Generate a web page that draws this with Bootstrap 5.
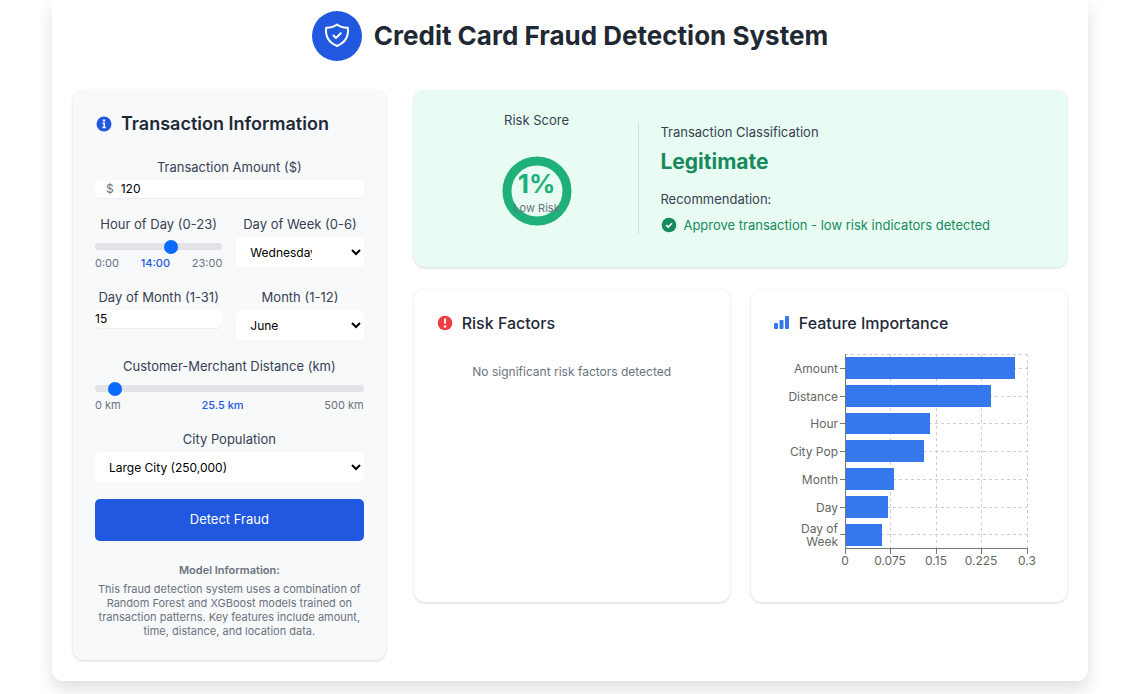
<!DOCTYPE html>
<html lang="en">
<head>
<meta charset="utf-8">
<meta name="viewport" content="width=device-width, initial-scale=1">
<title>Credit Card Fraud Detection System</title>
<link href="https://cdn.jsdelivr.net/npm/bootstrap@5.3.0/dist/css/bootstrap.min.css" rel="stylesheet">
<style>
:root { --brand: #2158e0; --ink: #1f2937; --slate: #374151; --muted: #6b7280; --ok: #178a5d; --soft: 0 1px 3px rgba(0,0,0,.16); }
body { font-family: Inter, "Liberation Sans", sans-serif; font-size: 13px; line-height: 18px; color: var(--slate); background: #fff; }
.page { padding: 0 40px 13px 52px; }
.sheet { background: #fff; padding: 11px 21px 21px; border-radius: 0 0 11px 11px; }
.brand-icon { width: 50px; height: 50px; background: var(--brand); }
.page-title { font-size: 26px; line-height: 32px; font-weight: 700; color: #1f2933; }
.panel { border-radius: 11px; box-shadow: var(--soft); padding: 22px; }
.panel-form { background: #f8f9fb; }
.panel-title { font-size: 18px; line-height: 24px; font-weight: 600; color: var(--ink); }
.sub-title { font-size: 16px; line-height: 24px; font-weight: 500; color: var(--ink); }
.main-row { --bs-gutter-x: 28px; --bs-gutter-y: 29px; }
.pair-row { --bs-gutter-x: 14px; --bs-gutter-y: 17px; }
.card-row { --bs-gutter-x: 21px; --bs-gutter-y: 22px; }
.stack { gap: 17px; margin-top: 22px; }
.field-label { display: block; text-align: center; margin-bottom: 4px; white-space: nowrap; }
.field, .pick { display: block; width: 100%; border: 0; border-radius: 5px; background-color: #fff; color: #000; font-size: 12px; }
.field { height: 18px; padding: 0; box-shadow: 0 1px 1px rgba(0,0,0,.05); }
.money { background: #fff; border-radius: 5px; padding-left: 11px; color: var(--muted); font-size: 12px; box-shadow: 0 1px 1px rgba(0,0,0,.05); gap: 7px; }
.money .field { box-shadow: none; }
.pick { height: 30px; padding: 0 36px 0 10px; }
.slide { -webkit-appearance: none; appearance: none; display: block; width: 100%; height: 18px; margin: 0; background: transparent; }
.slide::-webkit-slider-runnable-track { height: 7px; border-radius: 4px; background: #e1e3e8; }
.slide::-webkit-slider-thumb { -webkit-appearance: none; width: 14px; height: 14px; margin-top: -3px; border-radius: 50%; background: #076bff; }
.scale { font-size: 11px; line-height: 16px; color: var(--muted); }
.scale output { color: var(--brand); font-weight: 500; }
.btn-detect { background: var(--brand); color: #fff; height: 42px; padding: 0; font-size: 13px; border: 0; border-radius: 5px; }
.btn-detect:hover { background: #1b49bd; color: #fff; }
.about-box { padding-top: 17px; }
.about { font-size: 11px; line-height: 14px; color: var(--muted); margin-top: 5px; }
.result { background: #e8fcf3; padding: 21px; min-height: 177px; }
.result-main { padding: 0 21px; border-left: 1px solid #d5dde0; }
.gauge { width: 70px; height: 70px; margin-top: 27px; }
.gauge-num { font-size: 26px; line-height: 26px; font-weight: 700; color: #1fb079; }
.gauge-text { font-size: 11px; line-height: 14px; color: var(--muted); white-space: nowrap; }
.verdict { font-size: 21px; line-height: 25px; font-weight: 700; color: var(--ok); }
.advice { color: var(--ok); gap: 5px; }
.detail { min-height: 313px; }
.empty-note { margin-top: 28px; font-size: 12px; color: var(--muted); }
.icon-box { width: 18px; height: 18px; flex: none; }
.chart { width: 272px; height: 228px; margin-top: 15px; }
.chart text { font-size: 12px; fill: #666; }
</style>
</head>
<body>
<div class="page">
<main class="sheet shadow">
  <header class="d-flex justify-content-center align-items-center">
    <span class="brand-icon rounded-circle d-flex align-items-center justify-content-center me-2 flex-shrink-0">
      <svg width="28" height="28" viewBox="0 0 28 28" fill="none" stroke="#fff" stroke-width="2" stroke-linecap="round" stroke-linejoin="round" aria-hidden="true"><path d="M14 2.500c3 2.400 6.800 3.300 10.800 3.200 1 7.800-2.300 14.800-10.800 18.300C5.500 20.500 2.200 13.500 3.200 5.700 7.200 5.800 11 4.900 14 2.500z"/><path d="M10.500 13.500l2.500 2.500 4.800-4.800"/></svg>
    </span>
    <h1 class="page-title mb-0 ms-1">Credit Card Fraud Detection System</h1>
  </header>

  <div class="row main-row mt-0">
    <div class="col-12 col-md-4">
      <section class="panel panel-form">
        <h2 class="panel-title d-flex align-items-center gap-2 mb-0">
          <svg class="icon-box" viewBox="0 0 18 18" aria-hidden="true"><circle cx="9" cy="9" r="7.500" fill="#2158e0"/><circle cx="9" cy="5.400" r="1.200" fill="#fff"/><path d="M7.500 8.200h1.700v4M7.400 12.400h3.500" fill="none" stroke="#fff" stroke-width="1.500"/></svg>
          Transaction Information
        </h2>
        <form class="stack d-flex flex-column" onsubmit="return false">
          <div>
            <label class="field-label" for="amount">Transaction Amount ($)</label>
            <div class="money d-flex"><span>$</span><input class="field" id="amount" type="text" inputmode="decimal" value="120"></div>
          </div>
          <div class="row pair-row mt-0">
            <div class="col-6 mt-0">
              <label class="field-label" for="hour">Hour of Day (0-23)</label>
              <input class="slide" id="hour" type="range" min="0" max="23" value="14">
              <div class="scale d-flex justify-content-between"><span>0:00</span><output for="hour">14:00</output><span>23:00</span></div>
            </div>
            <div class="col-6 mt-0">
              <label class="field-label" for="weekday">Day of Week (0-6)</label>
              <select class="pick" id="weekday"><option>Sunday</option><option>Monday</option><option>Tuesday</option><option selected>Wednesday</option><option>Thursday</option><option>Friday</option><option>Saturday</option></select>
            </div>
            <div class="col-6">
              <label class="field-label" for="day">Day of Month (1-31)</label>
              <input class="field" id="day" type="text" inputmode="numeric" value="15">
            </div>
            <div class="col-6">
              <label class="field-label" for="month">Month (1-12)</label>
              <select class="pick" id="month"><option>May</option><option selected>June</option><option>July</option></select>
            </div>
          </div>
          <div>
            <label class="field-label" for="distance">Customer-Merchant Distance (km)</label>
            <input class="slide" id="distance" type="range" min="0" max="500" step="0.5" value="25.5">
            <div class="scale d-flex justify-content-between"><span>0 km</span><output for="distance">25.5 km</output><span>500 km</span></div>
          </div>
          <div>
            <label class="field-label" for="city">City Population</label>
            <select class="pick" id="city"><option>Small Town (10,000)</option><option selected>Large City (250,000)</option></select>
          </div>
          <button class="btn btn-detect w-100" type="submit">Detect Fraud</button>
        </form>
        <div class="about-box text-center">
          <div class="about fw-semibold">Model Information:</div>
          <p class="about mb-0">This fraud detection system uses a combination of Random Forest and XGBoost models trained on transaction patterns. Key features include amount, time, distance, and location data.</p>
        </div>
      </section>
    </div>

    <div class="col-12 col-md-8">
      <section class="panel result d-flex">
        <div class="row g-0 flex-fill">
          <div class="col-4 d-flex flex-column align-items-center">
            <div>Risk Score</div>
            <div class="gauge position-relative">
              <svg class="d-block" width="70" height="70" viewBox="0 0 70 70" aria-hidden="true"><circle cx="35" cy="35" r="30" fill="none" stroke="#1fb079" stroke-width="9"/></svg>
              <div class="position-absolute top-0 start-0 w-100 h-100 d-flex flex-column align-items-center justify-content-center pt-1">
                <div class="gauge-num">1%</div>
                <div class="gauge-text pt-1">Low Risk</div>
              </div>
            </div>
          </div>
          <div class="col-8 align-self-center result-main">
            <div>Transaction Classification</div>
            <div class="verdict mt-2">Legitimate</div>
            <div class="mt-3">Recommendation:</div>
            <div class="advice d-flex align-items-center mt-2">
              <svg class="icon-box" viewBox="0 0 18 18" aria-hidden="true"><circle cx="9" cy="9" r="7.300" fill="#178a5d"/><path d="M6 9l2.200 2.100L12 7.300" fill="none" stroke="#fff" stroke-width="1.600"/></svg>
              <span>Approve transaction - low risk indicators detected</span>
            </div>
          </div>
        </div>
      </section>

      <div class="row card-row mt-0">
        <div class="col-12 col-lg-6">
          <section class="panel detail h-100">
            <h3 class="sub-title d-flex align-items-center mb-0">
              <svg class="icon-box me-2" viewBox="0 0 18 18" aria-hidden="true"><circle cx="9" cy="9" r="7.300" fill="#ef3e42"/><path d="M9 4.500v5" stroke="#fff" stroke-width="2"/><circle cx="9" cy="12.500" r="1.200" fill="#fff"/></svg>
              Risk Factors
            </h3>
            <p class="empty-note text-center mb-0">No significant risk factors detected</p>
          </section>
        </div>
        <div class="col-12 col-lg-6">
          <section class="panel detail h-100">
            <h3 class="sub-title d-flex align-items-center mb-0">
              <svg class="icon-box me-2" viewBox="0 0 18 18" fill="#3578ee" aria-hidden="true"><rect x="1" y="9" width="4" height="6" rx="1"/><rect x="6.500" y="6" width="4" height="9" rx="1"/><rect x="12" y="2" width="4" height="13" rx="1"/></svg>
              Feature Importance
            </h3>
            <svg class="chart d-block mw-100" viewBox="0 0 272 228" role="img" aria-label="Feature importance bar chart">
              <g fill="none" stroke="#ccc" stroke-dasharray="3 3" shape-rendering="crispEdges"><path d="M72 4h182M72 18h182M72 46h182M72 73h182M72 101h182M72 129h182M72 157h182M72 184h182M117 4v194M163 4v194M208 4v194M254 4v194"/></g>
              <g fill="#3578ee"><rect x="72" y="7" width="170" height="22"/><rect x="72" y="35" width="146" height="22"/><rect x="72" y="63" width="85" height="21"/><rect x="72" y="90" width="79" height="22"/><rect x="72" y="118" width="49" height="22"/><rect x="72" y="146" width="43" height="22"/><rect x="72" y="174" width="37" height="22"/></g>
              <path d="M72 4v200M72 198h182M117 198v6M163 198v6M208 198v6M254 198v6M67 18h5M67 46h5M67 73h5M67 101h5M67 129h5M67 157h5M67 184h5" fill="none" stroke="#777" shape-rendering="crispEdges"/>
              <g text-anchor="end"><text x="65" y="23">Amount</text><text x="65" y="51">Distance</text><text x="65" y="78">Hour</text><text x="65" y="106">City Pop</text><text x="65" y="134">Month</text><text x="65" y="162">Day</text><text x="65" y="183">Day of</text><text x="65" y="196">Week</text></g>
              <g text-anchor="middle"><text x="72" y="215">0</text><text x="117" y="215">0.075</text><text x="163" y="215">0.15</text><text x="208" y="215">0.225</text><text x="254" y="215">0.3</text></g>
            </svg>
          </section>
        </div>
      </div>
    </div>
  </div>
</main>
</div>
<script src="https://cdn.jsdelivr.net/npm/bootstrap@5.3.0/dist/js/bootstrap.bundle.min.js"></script>
</body>
</html>
